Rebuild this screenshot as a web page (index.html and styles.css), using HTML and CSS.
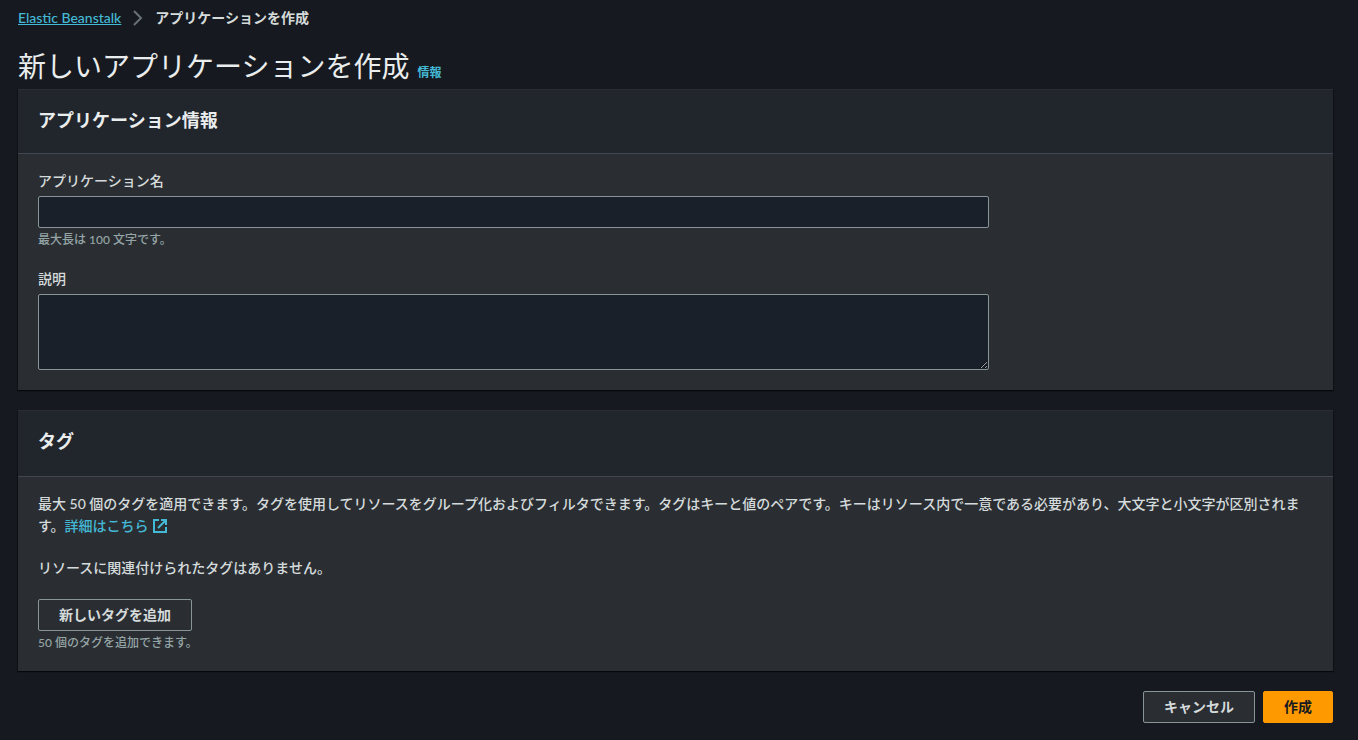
FILE: index.html
```html
<!DOCTYPE html>
<html lang="ja">
<head>
    <meta charset="UTF-8">
    <meta name="viewport" content="width=device-width, initial-scale=1.0">
    <title>アプリケーションを作成</title>
    <link rel="stylesheet" href="styles.css">
</head>
<body>
    <nav class="breadcrumb" aria-label="Breadcrumb">
        <a href="#">Elastic Beanstalk</a>
        <svg class="chevron" viewBox="0 0 16 16" aria-hidden="true"><path d="M4 1l7 7-7 7"/></svg>
        <span class="current">アプリケーションを作成</span>
    </nav>

    <main>
        <header class="page-header">
            <h1>新しいアプリケーションを作成</h1>
            <a class="info" href="#">情報</a>
        </header>

        <form>
            <section class="panel">
                <header class="panel-header">
                    <h2>アプリケーション情報</h2>
                </header>
                <div class="panel-body fields">
                    <div class="field">
                        <label for="app-name">アプリケーション名</label>
                        <input type="text" id="app-name">
                        <p class="hint">最大長は 100 文字です。</p>
                    </div>
                    <div class="field">
                        <label for="description">説明</label>
                        <textarea id="description" rows="3"></textarea>
                    </div>
                </div>
            </section>

            <section class="panel">
                <header class="panel-header tags-header">
                    <h2>タグ</h2>
                </header>
                <div class="panel-body tags">
                    <p>最大 50 個のタグを適用できます。タグを使用してリソースをグループ化およびフィルタできます。タグはキーと値のペアです。キーはリソース内で一意である必要があり、大文字と小文字が区別されます。<a class="learn-more" href="#">詳細はこちら<svg class="external" viewBox="0 0 16 16" aria-hidden="true"><path d="M7 2H2v12h12V9M9 2h5v5M6 10l8-8"/></svg></a></p>
                    <p>リソースに関連付けられたタグはありません。</p>
                    <div>
                        <button type="button" class="btn">新しいタグを追加</button>
                        <p class="hint">50 個のタグを追加できます。</p>
                    </div>
                </div>
            </section>

            <div class="actions">
                <button type="button" class="btn">キャンセル</button>
                <button type="submit" class="btn primary">作成</button>
            </div>
        </form>
    </main>
</body>
</html>
```
FILE: styles.css
```css
* {
    box-sizing: border-box;
}

body {
    margin: 0;
    padding: 7px 25px 17px 18px;
    background-color: #16191f;
    color: #d5dbdb;
    font-family: Lato, "Noto Sans CJK JP", sans-serif;
    font-size: 14px;
    font-weight: 500;
    line-height: 22px;
}

h1, h2, p {
    margin: 0;
}

a {
    color: #44b9d6;
    text-decoration: none;
}

.breadcrumb {
    display: flex;
    align-items: center;
    gap: 9px;
}

.breadcrumb a {
    text-decoration: underline;
}

.breadcrumb .current {
    font-weight: 700;
}

.chevron {
    width: 16px;
    height: 16px;
    fill: none;
    stroke: #687078;
    stroke-width: 2;
}

.page-header {
    display: flex;
    align-items: baseline;
    gap: 8px;
    margin-top: 19px;
}

.page-header h1 {
    color: #eaeded;
    font-size: 28px;
    font-weight: 400;
    line-height: 36px;
}

.page-header .info {
    font-size: 12px;
    font-weight: 700;
}

form {
    display: flex;
    flex-direction: column;
    gap: 20px;
    margin-top: 5px;
}

.panel {
    background-color: #2a2e33;
    border-top: 1px solid #2a2e33;
    box-shadow: 0 1px 1px 0 rgba(0, 0, 0, 0.5), 1px 1px 1px 0 rgba(0, 0, 0, 0.2), -1px 1px 1px 0 rgba(0, 0, 0, 0.2);
}

.panel-header {
    padding: 19px 20px 22px;
    background-color: #21252c;
    border-bottom: 1px solid #414750;
}

.panel-header h2 {
    color: #eaeded;
    font-size: 18px;
    font-weight: 700;
    line-height: 22px;
}

.tags-header {
    padding-bottom: 24px;
}

.panel-body {
    padding: 16px 20px 20px;
}

.fields,
.tags {
    display: flex;
    flex-direction: column;
    gap: 20px;
}

.field {
    display: flex;
    flex-direction: column;
    width: calc(75% - 5px);
}

.field label {
    margin-bottom: 4px;
}

.field input,
.field textarea {
    padding: 4px 10px;
    background-color: #1a2029;
    border: 1px solid #879596;
    border-radius: 2px;
    color: #d5dbdb;
    font: inherit;
}

.field input {
    height: 32px;
}

.field textarea {
    height: 76px;
    resize: vertical;
}

.hint {
    margin-top: 4px;
    color: #95a5a6;
    font-size: 12px;
    line-height: 16px;
}

.external {
    width: 16px;
    height: 16px;
    margin-left: 3px;
    vertical-align: -3px;
    fill: none;
    stroke: currentColor;
    stroke-width: 2;
}

.btn {
    height: 32px;
    padding: 0 20px;
    background-color: #2a2e33;
    border: 1px solid #879596;
    border-radius: 2px;
    color: #d5dbdb;
    font: inherit;
    font-weight: 700;
    cursor: pointer;
}

.btn.primary {
    background-color: #ff9900;
    border-color: #ff9900;
    color: #16191f;
}

.actions {
    display: flex;
    justify-content: flex-end;
    gap: 8px;
}
```
